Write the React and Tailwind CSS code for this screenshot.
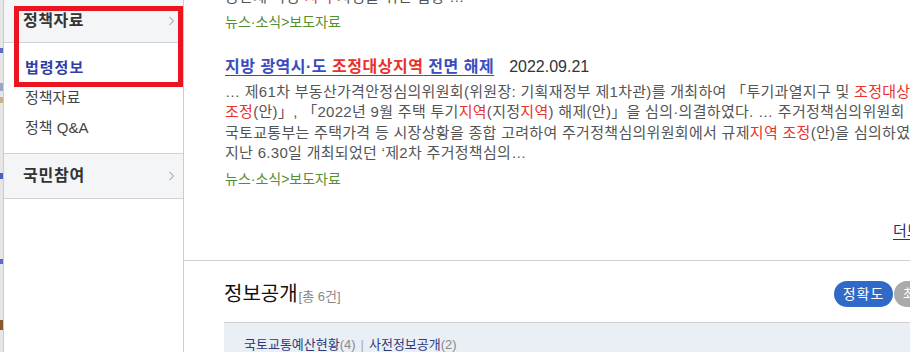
const FONT = "font-['Liberation_Sans','Noto_Sans_CJK_KR',sans-serif]"

const SUBMENU = ['법령정보', '정책자료', '정책 Q&A']

function Red({ children }) {
  return <span className="text-[#e8322b]">{children}</span>
}

function Chevron() {
  return (
    <svg width="7" height="10" viewBox="0 0 7 10" className="flex-shrink-0">
      <polyline points="1.5,1 5.5,5 1.5,9" fill="none" stroke="#b5b8bd" strokeWidth="1.2" />
    </svg>
  )
}

function Sidebar() {
  return (
    <aside className="w-[181px] flex-shrink-0 border-l border-r border-[#c9ccd1] bg-white flex flex-col">
      {/* 정책자료 */}
      <div className="h-[43px] flex-shrink-0 bg-[#f4f5f7] border-b border-[#cfd2d6] flex items-center pl-[19px] pr-[8px]">
        <span className="flex-1 text-[16px] font-bold tracking-[0.5px] text-[#333]">정책자료</span>
        <Chevron />
      </div>
      <div className="pt-[10px] pb-[10px] border-b border-[#cfd2d6]">
        {SUBMENU.map((m, i) => (
          <div key={m}
            className={`h-[30px] flex items-center pl-[21px] text-[15px] ${i === 0 ? 'font-bold tracking-[1px] text-[#2f3ea6]' : 'text-[#444]'}`}>
            {m}
          </div>
        ))}
      </div>
      {/* 국민참여 */}
      <div className="h-[45px] flex-shrink-0 bg-[#f4f5f7] border-b border-[#cfd2d6] flex items-center pl-[19px] pr-[8px]">
        <span className="flex-1 text-[16px] font-bold tracking-[0.8px] text-[#333]">국민참여</span>
        <Chevron />
      </div>
    </aside>
  )
}

function Crumb() {
  return <div className="text-[14px] leading-[20px] text-[#55902f]">뉴스·소식&gt;보도자료</div>
}

function Results() {
  return (
    <section className="flow-root border-b border-[#d0d0d0] h-[261px] pl-[41px] whitespace-nowrap">
      <p className="mt-[-13px] text-[15px] tracking-[0.3px] leading-[20px] text-[#555]">
        공간제 특정 <Red>지역</Red> 지정을 위한 협상 …
      </p>
      <div className="mt-[5px]"><Crumb /></div>

      <div className="mt-[24px] flex items-center gap-[15px] leading-[22px]">
        <a className="text-[16px] font-bold tracking-[0.5px] text-[#3b4cc0] underline underline-offset-[3px]">
          지방 광역시·도 <Red>조정대상지역</Red> 전면 해제
        </a>
        <span className="text-[16px] text-[#333]">2022.09.21</span>
      </div>

      <div className="mt-[4px] text-[15px] tracking-[0.3px] leading-[20.4px] text-[#555]">
        <p>… 제61차 부동산가격안정심의위원회(위원장: 기획재정부 제1차관)를 개최하여 「투기과열지구 및 <Red>조정대상지역</Red> 조정(안)」,</p>
        <p><Red>조정</Red>(안)」, 「2022년 9월 주택 투기<Red>지역</Red>(지정<Red>지역</Red>) 해제(안)」을 심의·의결하였다. … 주거정책심의위원회</p>
        <p>국토교통부는 주택가격 등 시장상황을 종합 고려하여 주거정책심의위원회에서 규제<Red>지역 조정</Red>(안)을 심의하였다.</p>
        <p>지난 6.30일 개최되었던 ‘제2차 주거정책심의…</p>
      </div>
      <div className="mt-[5px]"><Crumb /></div>

      <div className="mt-[30px] pl-[668px]">
        <a className="text-[15px] leading-[20px] text-[#2a3070] underline underline-offset-[3px]">더보기</a>
      </div>
    </section>
  )
}

function InfoOpen() {
  return (
    <section className="pl-[40px] w-[769px]">
      <div className="mt-[20px] h-[26px] flex items-center justify-between">
        <div className="flex items-baseline">
          <h2 className="text-[20px] text-[#111]">정보공개</h2>
          <span className="text-[13px] text-[#888] ml-[1px]">[총 6건]</span>
        </div>
        <div className="flex gap-[1px]">
          <button className="w-[59px] h-[26px] rounded-full bg-[#3069c8] text-white text-[14px] tracking-[1px]">정확도</button>
          <button className="w-[59px] h-[26px] rounded-full bg-[#aaaaaa] text-white text-[14px] tracking-[1px]">최신순</button>
        </div>
      </div>
      <div className="mt-[15px] border-t border-[#cfcfcf] bg-[#e9eff5] h-[60px] pl-[20px] pt-[12px] text-[13px] leading-[20px]">
        <span className="text-[#2c3a7a]">국토교통예산현황</span><span className="text-[#8a8a8a]">(4)</span>
        <span className="text-[#aaa] mx-[5px]">|</span>
        <span className="text-[#2c3a7a]">사전정보공개</span><span className="text-[#8a8a8a]">(2)</span>
      </div>
    </section>
  )
}

export default function App() {
  return (
    <div className={`${FONT} relative w-[910px] h-[352px] overflow-hidden bg-white flex`}>
      {/* page behind, left edge */}
      <div className="w-[3px] flex-shrink-0 bg-[#e6e6e6] flex flex-col">
        <div className="mt-[48px] h-[5px] bg-[#5b6cc8]" />
        <div className="mt-[30px] h-[8px] bg-[#9aa3c8]" />
        <div className="mt-[6px] h-[6px] bg-[#c9b08a]" />
        <div className="mt-[70px] h-[6px] bg-[#4a5fc0]" />
        <div className="mt-[80px] h-[5px] bg-[#5b6cc8]" />
        <div className="mt-[56px] h-[10px] bg-[#8a5a2a]" />
      </div>

      <Sidebar />

      <main className="flex-1 min-w-0">
        <Results />
        <InfoOpen />
      </main>

      {/* annotation box */}
      <div className="absolute left-[14px] top-[6px] w-[169px] h-[81px] border-[5px] border-[#ea1520]" />
    </div>
  )
}
